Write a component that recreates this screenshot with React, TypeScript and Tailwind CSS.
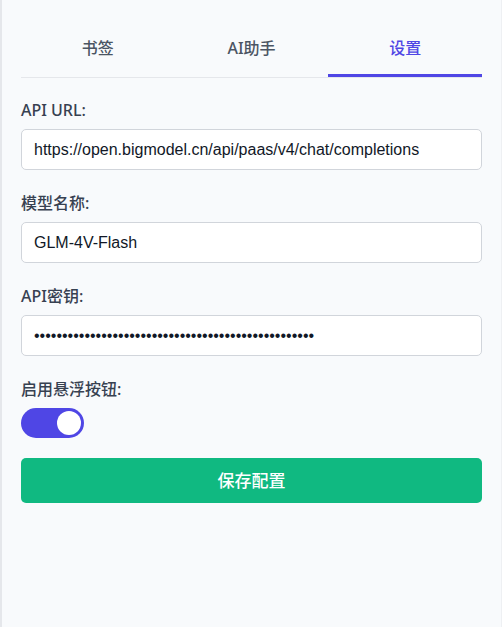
import React, { useState } from "react";

export default function App() {
  const [enabled, setEnabled] = useState(true);
  const tabs = ["书签", "AI助手", "设置"];
  const active = 2;
  const labelCls =
    "block text-[16px] font-medium text-[#374151] leading-[24px] mb-[7px]";
  const inputCls =
    "w-full h-[41px] rounded-[5px] border border-[#d1d5db] bg-white px-[12px] text-[16px] text-[#111827] outline-none";
  const inputFont = { fontFamily: '"Liberation Sans", Arial, "Noto Sans CJK SC", sans-serif' };
  return (
    <div
      className="w-[502px] h-[627px] bg-[#f8fafc] border-l-2 border-r border-l-[#e5e7eb] border-r-[#eef0f3] px-[19px] pt-[26px]"
      style={{ fontFamily: '"Noto Sans", "Noto Sans CJK SC", sans-serif' }}
    >
      <div className="flex border-b border-[#e5e7eb]">
        {tabs.map((t, i) => (
          <div
            key={t}
            className={
              i === active
                ? "flex-1 text-center text-[16px] font-medium text-[#4f46e5] h-[51px] leading-[44px] border-b-[3px] border-[#4f46e5] -mb-[1px]"
                : "flex-1 text-center text-[16px] font-medium text-[#4b5563] h-[51px] leading-[44px]"
            }
          >
            {t}
          </div>
        ))}
      </div>

      <div className="pt-[20px] flex flex-col">
        <div className="mb-[21px]">
          <label className={labelCls}>API URL:</label>
          <input
            className={inputCls}
            style={inputFont}
            defaultValue="https://open.bigmodel.cn/api/paas/v4/chat/completions"
          />
        </div>
        <div className="mb-[21px]">
          <label className={labelCls}>模型名称:</label>
          <input className={inputCls} style={inputFont} defaultValue="GLM-4V-Flash" />
        </div>
        <div className="mb-[21px]">
          <label className={labelCls}>API密钥:</label>
          <input
            type="password"
            className={inputCls}
            style={inputFont}
            defaultValue="abcdefghijklmnopqrstuvwxyz0123456789abcdefghijklmn"
          />
        </div>
        <div className="mb-[20px]">
          <label className={labelCls}>启用悬浮按钮:</label>
          <button
            onClick={() => setEnabled(!enabled)}
            className={
              enabled
                ? "relative w-[63px] h-[30px] rounded-full bg-[#4f46e5] flex items-center"
                : "relative w-[63px] h-[30px] rounded-full bg-[#d1d5db] flex items-center"
            }
          >
            <span
              className={
                enabled
                  ? "absolute left-[36px] w-[24px] h-[24px] rounded-full bg-white"
                  : "absolute left-[3px] w-[24px] h-[24px] rounded-full bg-white"
              }
            />
          </button>
        </div>
        <button className="w-full h-[45px] rounded-[5px] bg-[#10b981] text-white text-[17px] font-medium">
          保存配置
        </button>
      </div>
    </div>
  );
}
